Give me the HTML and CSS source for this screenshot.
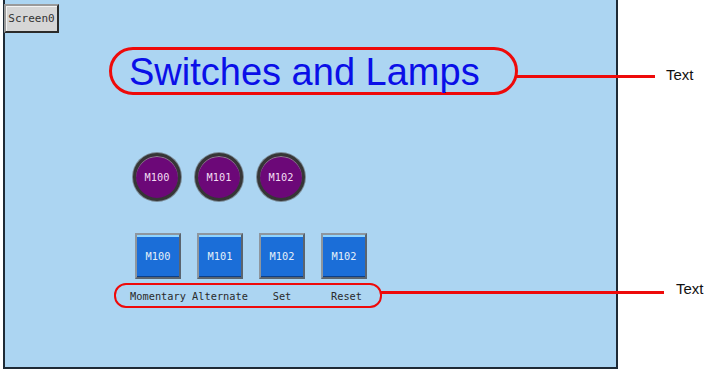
FILE: index.html
```html
<!doctype html>
<html lang="en">

<head>
    <meta charset="UTF-8">
    <title>Switches and Lamps</title>
    <link rel="stylesheet" href="styles.css">
</head>

<body>
    <div class="stage">
        <div class="screen">
            <div class="screen-btn">Screen0</div>

            <div class="title-pill">Switches and Lamps</div>

            <div class="lamps">
                <div class="lamp">M100</div>
                <div class="lamp">M101</div>
                <div class="lamp">M102</div>
            </div>

            <div class="switches">
                <div class="switch">M100</div>
                <div class="switch">M101</div>
                <div class="switch">M102</div>
                <div class="switch">M102</div>
            </div>

            <div class="label-pill">
                <span>Momentary</span>
                <span>Alternate</span>
                <span>Set</span>
                <span class="last">Reset</span>
            </div>
        </div>

        <!-- callouts -->
        <div class="leader leader-title"></div>
        <div class="callout callout-title">Text</div>
        <div class="leader leader-labels"></div>
        <div class="callout callout-labels">Text</div>
    </div>
</body>

</html>
```

FILE: styles.css
```css
* {
    box-sizing: border-box;
}

body {
    margin: 0;
    background: #ffffff;
    font-family: "Liberation Sans", Arial, sans-serif;
}

.stage {
    position: relative;
    width: 713px;
    height: 371px;
}

.screen {
    margin-left: 3px;
    width: 615px;
    height: 369px;
    background: #acd5f2;
    border: 2px solid #1e2a36;
    border-top: none;
    display: flex;
    flex-direction: column;
    align-items: flex-start;
    font-family: "DejaVu Sans Mono", "Liberation Mono", monospace;
}

.screen-btn {
    margin: 4px 0 0 -1px;
    width: 55px;
    height: 29px;
    display: flex;
    align-items: center;
    justify-content: center;
    font-size: 11px;
    color: #333333;
    background: #d6d6d6;
    border: 2px solid #2b2b2b;
    border-top-color: #9a9a9a;
    border-left-color: #9a9a9a;
    box-shadow: inset 1px 1px 0 #f4f4f4;
}

.title-pill {
    margin: 14px 0 0 104px;
    width: 409px;
    height: 48px;
    padding: 2px 0 0 17px;
    border: 3px solid #ee0a0a;
    border-radius: 24px;
    display: flex;
    align-items: center;
    font-family: "Liberation Sans", Arial, sans-serif;
    font-size: 38px;
    color: #0a0fe8;
    line-height: 1;
}

.lamps {
    margin: 58px 0 0 128px;
    display: flex;
    gap: 14px;
}

.lamp {
    width: 48px;
    height: 48px;
    border-radius: 50%;
    background: #6c0878;
    border: 3px solid #363636;
    box-shadow: 0 0 0 1px #7a8a96, inset 0 1px 0 #8a8a8a;
    display: flex;
    align-items: center;
    justify-content: center;
    font-size: 10.3px;
    color: #f2dcf2;
}

.switches {
    margin: 32px 0 0 130px;
    display: flex;
    gap: 16px;
}

.switch {
    width: 46px;
    height: 46px;
    background: #1b6ed8;
    border: 2px solid #5b646e;
    border-top-color: #8e969e;
    border-left-color: #8e969e;
    box-shadow: inset 0 2px 0 #8fd4ff, inset 0 -1px 0 #0d3f86;
    display: flex;
    align-items: center;
    justify-content: center;
    font-size: 10.3px;
    color: #e4eef8;
}

.label-pill {
    margin: 4px 0 0 109px;
    width: 268px;
    height: 25px;
    padding-left: 11px;
    border: 2.5px solid #ee0a0a;
    border-radius: 12px;
    display: grid;
    grid-template-columns: repeat(4, 62px);
    align-items: center;
    font-size: 10.3px;
    color: #2a2a2a;
}

.label-pill span {
    text-align: center;
    white-space: nowrap;
}

.label-pill .last {
    padding-left: 5px;
}

.leader {
    position: absolute;
    height: 3px;
    background: #ee0a0a;
}

.leader-title {
    left: 516px;
    top: 75px;
    width: 139px;
}

.leader-labels {
    left: 380px;
    top: 291px;
    width: 284px;
}

.callout {
    position: absolute;
    font-size: 15px;
    color: #111111;
    line-height: 1;
}

.callout-title {
    left: 666px;
    top: 67px;
}

.callout-labels {
    left: 676px;
    top: 281px;
}
```
